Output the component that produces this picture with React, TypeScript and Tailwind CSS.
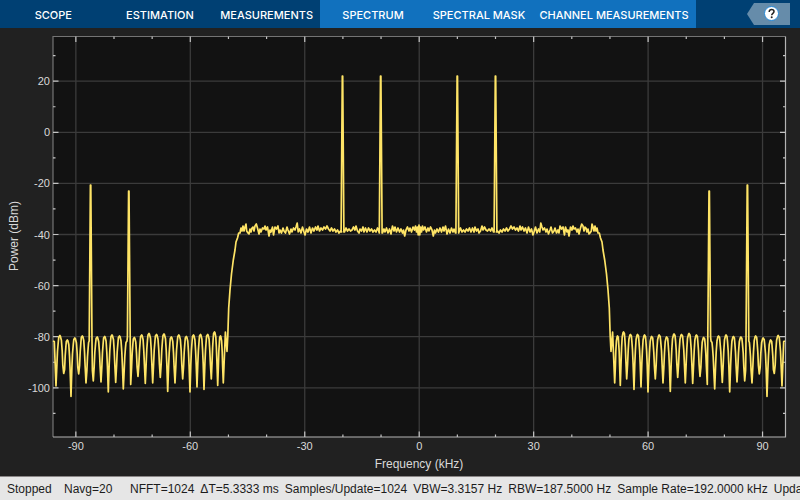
import clsx from "clsx";

const tabs = ["SCOPE", "ESTIMATION", "MEASUREMENTS"];
const contextTabs = ["SPECTRUM", "SPECTRAL MASK", "CHANNEL MEASUREMENTS"];

const readouts = [
  "NFFT=1024",
  "ΔT=5.3333 ms",
  "Samples/Update=1024",
  "VBW=3.3157 Hz",
  "RBW=187.5000 Hz",
  "Sample Rate=192.0000 kHz",
  "Upda",
];

// Plot box inside the chart's viewBox
const LEFT = 53;
const RIGHT = 785.5;
const TOP = 8.5;
const BOTTOM = 409;

const xOf = (khz: number) => 419.2 + khz * 3.815;
const yOf = (db: number) => 104.3 - db * 2.555;

const range = (from: number, to: number, step: number) => {
  const out: number[] = [];
  for (let v = from; v <= to; v += step) out.push(v);
  return out;
};

const xMinor = range(-90, 90, 10);
const xMajor = range(-90, 90, 30);
const yMinor = range(-110, 30, 10);
const yMajor = range(-100, 20, 20);

type Point = [number, number];

// Stopband nulls and the lobe top that follows each one
const nulls: Point[] = [
  [56, 358], [63.7, 345.5], [71, 368.5], [78.7, 346], [86, 355], [93.3, 353],
  [101, 354], [108.3, 364], [115.7, 354.5], [123.3, 361], [130.7, 356.5],
  [138, 348.5], [145.3, 355.5], [152.7, 355], [160.3, 349.5], [167.7, 363.5],
  [175, 355], [182.7, 351], [190, 364], [197, 359], [204, 361.5],
  [211.3, 351], [217.7, 357.5], [223.3, 355],
];
const lobeTops = [
  307.5, 312, 310, 308, 313, 309, 308.5, 307, 308, 313, 309.5, 307, 305.5,
  306.5, 306, 309, 307, 308.5, 307, 306.5, 306.5, 304, 308,
];

const passband: Point[] = [
  [240, 205], [241, 200], [242, 203], [243, 198], [244, 203], [245, 199], [246, 196], [246.7, 203],
  [248, 205], [249, 206], [250, 201], [251, 204], [252, 200], [253, 199], [254, 203], [255, 198],
  [256.3, 196], [257.5, 200], [259, 206], [260, 201], [261, 204], [262.5, 200], [264, 201],
  [265, 198], [266, 202], [267.5, 199], [269, 208], [270, 202], [271, 204], [272.5, 199], [273.5, 207],
  [275, 199], [276.5, 201], [278, 198], [279, 205], [280, 202], [281.5, 205], [283, 200],
  [284, 203], [285.5, 205], [287, 199], [288, 202], [289.5, 206], [291, 201], [292, 204],
  [293.5, 200], [295, 202], [296, 199], [297.2, 195], [298.2, 204], [299.5, 201], [301, 205],
  [302.5, 199], [304, 204], [305, 207], [306.5, 201], [308, 204], [309.5, 199], [311, 205],
  [312.5, 200], [314, 203], [315.5, 199], [317, 202], [318, 198], [319.5, 203], [321, 200],
  [322.5, 202], [324, 199], [325.5, 201], [327, 198], [328.5, 201], [330, 203], [331.5, 200],
  [333, 203], [334.5, 201], [336, 204], [337.5, 202], [339, 205], [340.5, 203], [341.6, 204],
];
const betweenTones: Point[] = [
  [344.5, 204], [346, 200], [347.5, 203], [349, 201], [350.5, 203], [352, 202], [353.5, 199],
  [355, 202], [356, 198], [357.5, 203], [359, 205], [360, 201], [361.5, 203], [363, 199],
  [364, 204], [365.5, 200], [367, 204], [368.5, 200], [370, 203], [371.5, 201], [373, 204],
  [374.5, 202], [376, 204], [377.5, 200], [379, 204],
];
const center: Point[] = [
  [382.5, 205], [384, 201], [385, 204], [386.5, 200], [388, 205], [389.5, 201], [391, 206],
  [392.5, 198], [394, 203], [395, 199], [396.5, 204], [398, 200], [399.5, 204], [401, 201],
  [402.5, 205], [403.5, 202], [404.7, 208], [406, 202], [407.5, 199], [409, 203], [410, 200],
  [411.5, 204], [413, 199], [414.5, 202], [415.5, 198], [416.5, 204], [417.5, 199], [418.2, 207], [419, 197],
];

const tone = (x: number, top: number, floor: number): Point[] => [
  [x - 1.5, floor],
  [x - 0.3, top],
  [x + 0.1, top],
  [x + 1.3, floor],
];

const stopband = (): Point[] => {
  const points: Point[] = [[53, 313], [54.3, 313.5]];
  nulls.forEach(([x, y], i) => {
    points.push([x, y]);
    const next = nulls[i + 1];
    if (!next) return;
    for (const t of [0.12, 0.2, 0.3, 0.36, 0.5, 0.56, 0.7, 0.8, 0.88]) {
      const drop = -20 * Math.log10(Math.sin(Math.PI * t)) * 3.4;
      const ripple = t === 0.36 || t === 0.7 ? -1.5 : 0;
      points.push([x + (next[0] - x) * t, lobeTops[i] + drop + ripple]);
    }
  });
  return points;
};

const insertTone = (points: Point[], x: number, top: number, floor: number): Point[] => [
  ...points.filter((p) => p[0] < x - 1.5),
  ...tone(x, top, floor),
  ...points.filter((p) => p[0] > x + 1.3),
];

const buildTrace = () => {
  let left = stopband();
  left = insertTone(left, 90.7, 157, 313);
  left = insertTone(left, 128.9, 163, 309);
  const half: Point[] = [
    ...left,
    [225.4, 304], [227, 323.5], [227.8, 308], [228.7, 280], [230, 262], [231.5, 246],
    [233.3, 232], [235, 222], [236, 214], [237.5, 210], [238.7, 205],
    ...passband,
    ...tone(342.6, 48, 204),
    ...betweenTones,
    ...tone(380.8, 48, 205),
    ...center,
  ];
  const mirrored = [...half].reverse().map(([x, y]): Point => [838 - x, y]);
  return [...half, ...mirrored].map(([x, y]) => `${x.toFixed(1)},${y.toFixed(1)}`).join(" ");
};

const trace = buildTrace();

const TabBar = () => {
  return (
    <header className="flex h-7 items-stretch bg-[#004073] font-[Inter,sans-serif] text-[11px] font-medium text-white">
      <nav className="grid w-80 grid-cols-3">
        {tabs.map((tab) => (
          <button key={tab} className="pt-0.5">
            {tab}
          </button>
        ))}
      </nav>
      <nav className="flex bg-[#1171be]">
        {contextTabs.map((tab, i) => (
          <button
            key={tab}
            className={clsx("pt-0.5 whitespace-nowrap", i === 2 ? "w-[164px]" : "w-[106px]")}
          >
            {tab}
          </button>
        ))}
      </nav>
      <button aria-label="Help" className="mr-2.5 ml-auto">
        <svg width="43" height="22" viewBox="0 0 43 22">
          <path d="M0 11 7 0H43V22H7Z" fill="#668caa" />
          <circle cx="24.5" cy="10.5" r="7" fill="#fff" stroke="#2589d8" strokeWidth="1" />
          <path
            d="M22.2 8.9c0-1.5 1-2.4 2.4-2.4s2.4.8 2.4 2.1c0 1.7-2.3 1.8-2.3 3.7"
            fill="none"
            stroke="#222"
            strokeWidth="1.5"
          />
          <circle cx="24.7" cy="14.3" r="1" fill="#222" />
        </svg>
      </button>
    </header>
  );
};

const SpectrumPlot = () => {
  return (
    <svg
      viewBox="0 0 800 448"
      className="block w-full bg-[#212121] font-['Liberation_Sans',sans-serif]"
      role="img"
      aria-label="Power spectrum"
    >
      <rect x={LEFT} y={TOP} width={RIGHT - LEFT} height={BOTTOM - TOP} fill="#121212" />

      {/* Grid */}
      <g stroke="#3b3b3b" strokeWidth="1.3">
        {xMajor.map((v) => (
          <line key={v} x1={xOf(v)} x2={xOf(v)} y1={TOP} y2={BOTTOM} />
        ))}
        {yMajor.map((v) => (
          <line key={v} x1={LEFT} x2={RIGHT} y1={yOf(v)} y2={yOf(v)} />
        ))}
      </g>

      {/* Axes box */}
      <path d={`M${LEFT} ${BOTTOM}V${TOP}H${RIGHT}`} fill="none" stroke="#747474" strokeWidth="1.2" />
      <path d={`M${LEFT} ${BOTTOM}H${RIGHT}V${TOP}`} fill="none" stroke="#b4b4b4" strokeWidth="1.2" />

      {/* Ticks */}
      <g stroke="#c4c4c4" strokeWidth="1.2">
        {xMinor.map((v) => {
          const len = v % 30 === 0 ? 5.5 : 2.5;
          return (
            <path key={v} d={`M${xOf(v)} ${TOP}v${len}M${xOf(v)} ${BOTTOM}v${-len}`} />
          );
        })}
        {yMinor.map((v) => {
          const len = v % 20 === 0 ? 5.5 : 2.5;
          return (
            <path key={v} d={`M${LEFT} ${yOf(v)}h${len}M${RIGHT} ${yOf(v)}h${-len}`} />
          );
        })}
      </g>

      <polyline
        points={trace}
        fill="none"
        stroke="#fee466"
        strokeWidth="1.7"
        strokeLinejoin="round"
      />

      {/* Labels */}
      <g fill="#d9d9d9" fontSize="11">
        {xMajor.map((v) => (
          <text key={v} x={xOf(v)} y="422" textAnchor="middle">
            {v}
          </text>
        ))}
        {yMajor.map((v) => (
          <text key={v} x="50" y={yOf(v) + 4} textAnchor="end">
            {v}
          </text>
        ))}
      </g>
      <g fill="#d9d9d9" fontSize="12" textAnchor="middle">
        <text x="419" y="440">
          Frequency (kHz)
        </text>
        <text transform="translate(18 208) rotate(-90)">Power (dBm)</text>
      </g>
    </svg>
  );
};

const StatusBar = () => {
  return (
    <footer className="flex h-6 items-center overflow-hidden border-t border-[#8a8686] bg-[#e6e6e6] pl-[7px] font-['Liberation_Sans',sans-serif] text-[12px] whitespace-nowrap text-[#1c1c1c]">
      <span className="w-[57px] shrink-0">Stopped</span>
      <span className="w-[66px] shrink-0">Navg=20</span>
      <div className="flex gap-1.5">
        {readouts.map((item) => (
          <span key={item}>{item}</span>
        ))}
      </div>
    </footer>
  );
};

const App = () => {
  return (
    <div className="flex min-h-screen flex-col bg-[#212121]">
      <TabBar />
      <SpectrumPlot />
      <StatusBar />
    </div>
  );
};

export default App;
